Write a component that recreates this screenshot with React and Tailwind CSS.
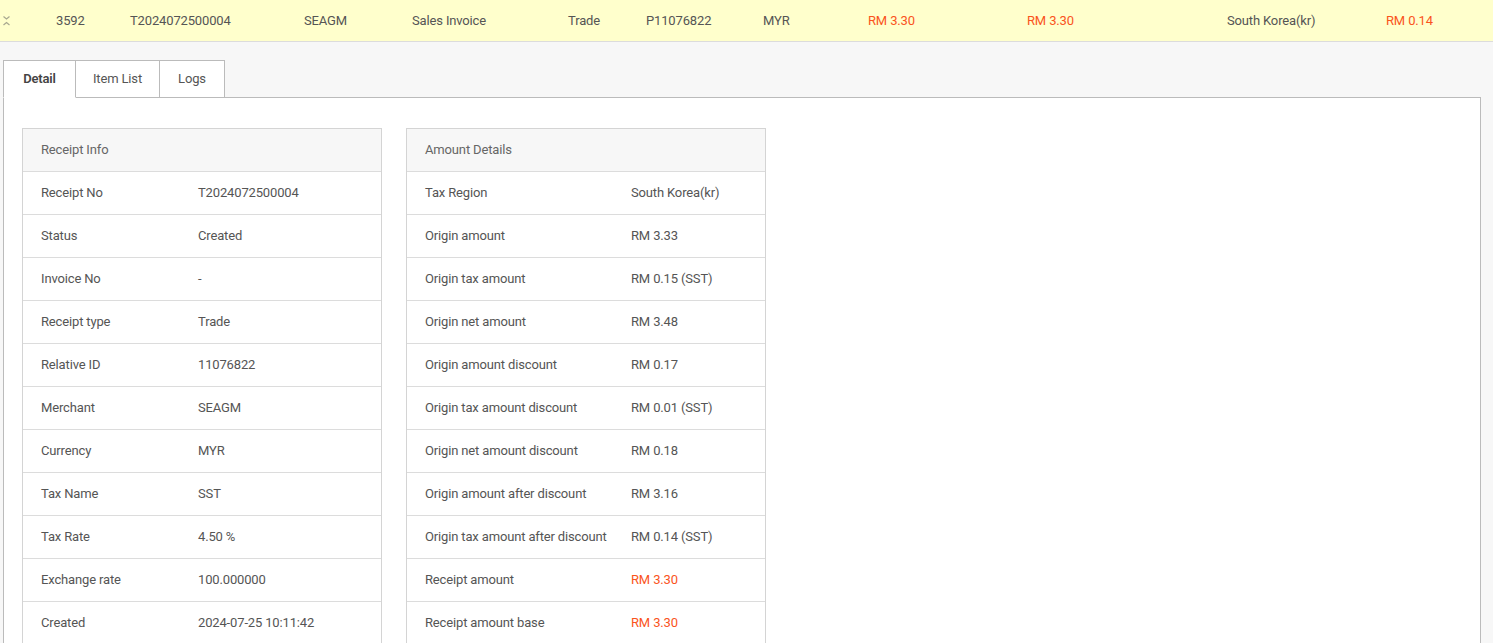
const font = { fontFamily: "Roboto, 'Liberation Sans', sans-serif" };

const topCells = [
  { w: "w-[74px]", text: "3592" },
  { w: "w-[174px]", text: "T2024072500004" },
  { w: "w-[108px]", text: "SEAGM" },
  { w: "w-[156px]", text: "Sales Invoice" },
  { w: "w-[78px]", text: "Trade" },
  { w: "w-[117px]", text: "P11076822" },
  { w: "w-[105px]", text: "MYR" },
  { w: "w-[159px]", text: "RM 3.30", red: true },
  { w: "w-[200px]", text: "RM 3.30", red: true },
  { w: "w-[159px]", text: "South Korea(kr)" },
  { w: "w-[100px]", text: "RM 0.14", red: true },
];

const receiptInfo = [
  ["Receipt No", "T2024072500004"],
  ["Status", "Created"],
  ["Invoice No", "-"],
  ["Receipt type", "Trade"],
  ["Relative ID", "11076822"],
  ["Merchant", "SEAGM"],
  ["Currency", "MYR"],
  ["Tax Name", "SST"],
  ["Tax Rate", "4.50 %"],
  ["Exchange rate", "100.000000"],
  ["Created", "2024-07-25 10:11:42"],
];

const amountDetails = [
  ["Tax Region", "South Korea(kr)"],
  ["Origin amount", "RM 3.33"],
  ["Origin tax amount", "RM 0.15 (SST)"],
  ["Origin net amount", "RM 3.48"],
  ["Origin amount discount", "RM 0.17"],
  ["Origin tax amount discount", "RM 0.01 (SST)"],
  ["Origin net amount discount", "RM 0.18"],
  ["Origin amount after discount", "RM 3.16"],
  ["Origin tax amount after discount", "RM 0.14 (SST)"],
  ["Receipt amount", "RM 3.30", true],
  ["Receipt amount base", "RM 3.30", true],
];

function ExpandIcon() {
  return (
    <svg width="9" height="14" viewBox="0 0 9 14" fill="none" stroke="#a8a890" strokeWidth="1.2">
      <path d="M1.5 2.5 L4.5 5 L7.5 2.5" />
      <path d="M1.5 11 L4.5 8.5 L7.5 11" />
    </svg>
  );
}

function InfoCard({ title, rows, labelW }) {
  return (
    <div className="w-[360px] border border-[#d4d4d4] bg-white">
      <div className="h-[43px] flex items-center px-[18px] bg-[#f7f7f7] border-b border-[#dcdcdc] text-[#666]">
        {title}
      </div>
      {rows.map(([label, value, red]) => (
        <div key={label} className="h-[43px] flex items-center px-[18px] border-b border-[#dcdcdc]">
          <div className={`${labelW} shrink-0 text-[#555]`}>{label}</div>
          <div className={red ? "text-[#fa541c]" : "text-[#555]"}>{value}</div>
        </div>
      ))}
    </div>
  );
}

export default function App() {
  return (
    <div className="min-h-screen bg-[#f7f7f7] text-[13px] tracking-[-0.15px] overflow-hidden" style={font}>
      {/* Expanded table row */}
      <div className="h-[42px] flex items-center bg-[#ffffcc] border-b border-[#dcdcdc]">
        <div className="w-[56px] pl-[2px] flex items-center">
          <ExpandIcon />
        </div>
        {topCells.map((c, i) => (
          <div key={i} className={`${c.w} shrink-0 ${c.red ? "text-[#fa541c]" : "text-[#555]"}`}>
            {c.text}
          </div>
        ))}
      </div>

      <div className="pl-[3px] pr-[12px] pt-[18px]">
        {/* Tabs */}
        <div className="flex h-[38px] relative z-10">
          <div className="w-[73px] flex items-center justify-center bg-white border border-[#bbb] border-b-white font-semibold text-[#444]">
            Detail
          </div>
          <div className="w-[84px] flex items-center justify-center bg-white border-t border-r border-b border-[#bbb] text-[#555]">
            Item List
          </div>
          <div className="w-[65px] flex items-center justify-center bg-white border-t border-r border-b border-[#bbb] text-[#555]">
            Logs
          </div>
        </div>

        {/* Tab panel */}
        <div className="-mt-px bg-white border border-[#bbb] pl-[18px] pt-[30px] pb-[40px]">
          <div className="flex gap-[24px] items-start">
            <InfoCard title="Receipt Info" rows={receiptInfo} labelW="w-[157px]" />
            <InfoCard title="Amount Details" rows={amountDetails} labelW="w-[206px]" />
          </div>
        </div>
      </div>
    </div>
  );
}
